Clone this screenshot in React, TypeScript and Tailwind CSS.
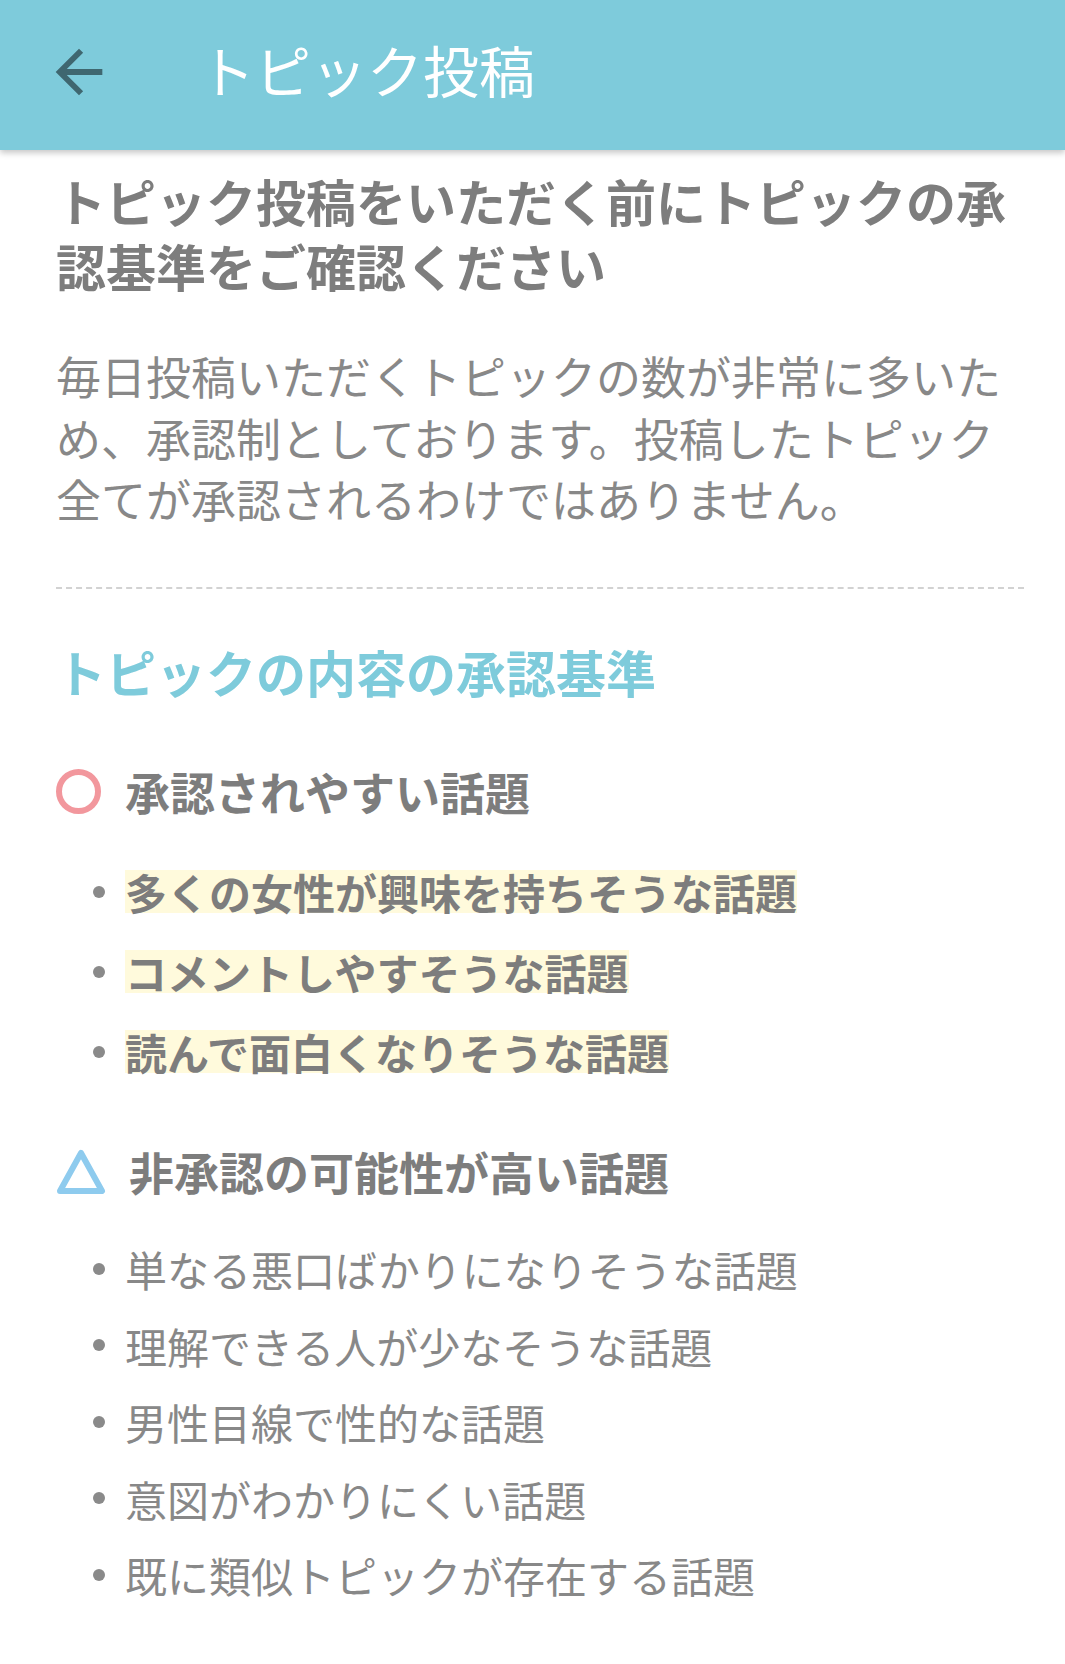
const font = { fontFamily: '"Noto Sans CJK JP", "Noto Sans", sans-serif' };

const approved = [
  "多くの女性が興味を持ちそうな話題",
  "コメントしやすそうな話題",
  "読んで面白くなりそうな話題",
];

const rejected = [
  "単なる悪口ばかりになりそうな話題",
  "理解できる人が少なそうな話題",
  "男性目線で性的な話題",
  "意図がわかりにくい話題",
  "既に類似トピックが存在する話題",
];

function Header() {
  return (
    <header className="relative z-10 h-[150px] bg-[#7ecbdb] flex items-center shadow-[0_3px_6px_rgba(0,0,0,0.22)]">
      <div className="w-[70px] h-[70px] ml-[44px] -mt-[6px] flex items-center justify-center">
        {/* material arrow_back */}
        <svg viewBox="0 0 24 24" className="w-[70px] h-[70px]" fill="#3f6770">
          <path d="M20 11H7.83l5.59-5.59L12 4l-8 8 8 8 1.41-1.41L7.83 13H20v-2z" />
        </svg>
      </div>
      <h1 className="ml-[85px] -mt-[12px] text-[56px] leading-none text-white">トピック投稿</h1>
    </header>
  );
}

function Dot() {
  return <span className="w-[12px] h-[12px] rounded-full bg-[#8a8a8a] shrink-0 mr-[20px] ml-[37px]" />;
}

export default function App() {
  return (
    <div className="w-[1065px] min-h-[1664px] bg-white" style={font}>
      <Header />

      <main className="pl-[56px] pr-[41px] pt-[18px]">
        <h2 className="text-[50px] leading-[65px] font-bold text-[#7d7d7d]">
          トピック投稿をいただく前にトピックの承認基準をご確認ください
        </h2>

        <p className="mt-[47px] text-[45px] leading-[61.5px] text-[#888888]">
          毎日投稿いただくトピックの数が非常に多いため、承認制としております。投稿したトピック全てが承認されるわけではありません。
        </p>

        <div className="mt-[57px] border-t-2 border-dashed border-[#d2d2d2]" />

        <h3 className="mt-[52px] text-[50px] leading-[60px] font-bold text-[#7ecbdb]">
          トピックの内容の承認基準
        </h3>

        {/* approved */}
        <div className="mt-[61px] flex items-center h-[60px]">
          <span className="w-[45px] h-[45px] rounded-full border-[6px] border-[#f2979d] shrink-0" />
          <span className="ml-[24px] text-[45px] font-bold text-[#7d7d7d] leading-[60px]">承認されやすい話題</span>
        </div>

        <ul className="mt-[40px] flex flex-col gap-[20px]">
          {approved.map((t) => (
            <li key={t} className="flex items-center h-[60px]">
              <Dot />
              <span className="inline-block bg-[#fffadc] text-[42px] leading-[43px] font-bold text-[#7d7d7d]">{t}</span>
            </li>
          ))}
        </ul>

        {/* maybe rejected */}
        <div className="mt-[60px] flex items-center h-[60px]">
          <svg viewBox="0 0 50 46" className="w-[50px] h-[46px] shrink-0">
            <path
              d="M25 4 L46 42 L4 42 Z"
              fill="none"
              stroke="#8ecbee"
              strokeWidth={6}
              strokeLinejoin="round"
            />
          </svg>
          <span className="ml-[23px] text-[45px] font-bold text-[#7d7d7d] leading-[60px]">非承認の可能性が高い話題</span>
        </div>

        <ul className="mt-[29px] flex flex-col">
          {rejected.map((t) => (
            <li key={t} className="flex items-center h-[76.5px]">
              <Dot />
              <span className="text-[42px] leading-[43px] text-[#888888]">{t}</span>
            </li>
          ))}
        </ul>
      </main>
    </div>
  );
}
